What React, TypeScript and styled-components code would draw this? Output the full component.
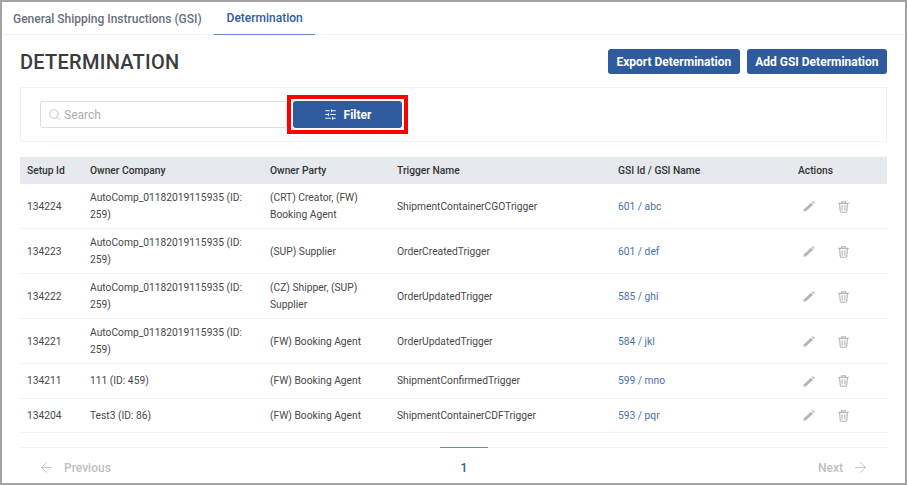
import React from 'react';
import styled, { createGlobalStyle } from 'styled-components';
import { ArrowLeft, ArrowRight, Search, SlidersHorizontal } from 'lucide-react';

const GlobalStyle = createGlobalStyle`
    html, body {
        margin: 0;
        padding: 0;
        background: #ffffff;
    }
    * {
        box-sizing: border-box;
    }
`;

const Frame = styled.div`
    width: 907px;
    height: 485px;
    border: 2px solid #a3a3a3;
    background: #ffffff;
    font-family: Roboto, 'Liberation Sans', sans-serif;
    color: #3c3c3c;
    overflow: hidden;
`;

const Tabs = styled.div`
    display: flex;
    height: 33px;
    border-bottom: 1px solid #eff0f2;
`;

const Tab = styled.div<{ $active?: boolean }>`
    height: 33px;
    display: flex;
    align-items: center;
    font-size: 12px;
    font-weight: 500;
    color: ${(p) => (p.$active ? '#2f5b9e' : '#68707c')};
    border-bottom: ${(p) => (p.$active ? '1px solid #5f86bd' : 'none')};
    padding: ${(p) => (p.$active ? '0 12px 0 13px' : '0 12px 0 11px')};
`;

const Content = styled.div`
    padding: 14px 18px 0 18px;
`;

const HeaderRow = styled.div`
    display: flex;
    justify-content: space-between;
    align-items: center;
    height: 25px;
`;

const Title = styled.h1`
    margin: 0;
    font-size: 20px;
    font-weight: 500;
    letter-spacing: 0.27px;
    color: #3b3b3b;
`;

const HeaderButtons = styled.div`
    display: flex;
    gap: 7px;
`;

const PrimaryButton = styled.button`
    height: 25px;
    padding: 0 8.5px;
    border: none;
    border-radius: 3px;
    background: #2f5b9e;
    color: #ffffff;
    font-family: inherit;
    font-size: 12px;
    font-weight: 700;
`;

const FilterPanel = styled.div`
    margin-top: 13px;
    height: 55px;
    border: 1px solid #f0f1f3;
    display: flex;
    align-items: center;
    padding-left: 19px;
`;

const SearchBox = styled.div`
    width: 247px;
    height: 27px;
    border: 1px solid #dcdee2;
    border-radius: 2px;
    display: flex;
    align-items: center;
    gap: 3px;
    padding-left: 7px;
    font-size: 12px;
    color: #a9adb4;
`;

const FilterHighlight = styled.div`
    border: 4px solid #ff0000;
    padding: 2px;
    height: 39px;
`;

const FilterButton = styled.button`
    width: 109px;
    height: 27px;
    border: none;
    border-radius: 3px;
    background: #2f5b9e;
    color: #ffffff;
    font-family: inherit;
    font-size: 12px;
    font-weight: 700;
    display: flex;
    align-items: center;
    justify-content: center;
    gap: 7px;
`;

const Table = styled.table`
    width: 100%;
    margin-top: 15px;
    border-collapse: collapse;
    table-layout: fixed;
    font-size: 10.25px;
`;

const HeadCell = styled.th`
    height: 27px;
    padding: 0 7px;
    background: #e6e9ee;
    text-align: left;
    font-weight: 500;
    color: #333333;
`;

const Row = styled.tr`
    border-bottom: 1px solid #f0f1f3;
`;

const Cell = styled.td<{ $tall?: boolean }>`
    padding: ${(p) => (p.$tall ? '5px 7px' : '8px 7px 8.5px')};
    line-height: 17px;
    color: #484848;
    vertical-align: middle;
`;

const GsiLink = styled.span`
    color: #4a6fa8;
`;

const Actions = styled.div`
    display: flex;
    align-items: center;
    gap: 23px;
    padding: 1px 0 0 5px;
`;

const Pager = styled.div`
    margin-top: 14px;
    height: 40px;
    border-top: 1px solid #f0f1f3;
    display: grid;
    grid-template-columns: 420px 48px 1fr;
    align-items: center;
    font-size: 12px;
    font-weight: 500;
    color: #bcbfc4;
`;

const PagerSide = styled.div<{ $right?: boolean }>`
    display: flex;
    align-items: center;
    gap: 9px;
    justify-content: ${(p) => (p.$right ? 'flex-end' : 'flex-start')};
    padding: ${(p) => (p.$right ? '0 18px 0 0' : '0 0 0 18px')};
`;

const PageNumber = styled.div`
    height: 40px;
    margin-top: -1px;
    border-top: 1px solid #5f86bd;
    display: flex;
    align-items: center;
    justify-content: center;
    color: #2f5b9e;
`;

const Pencil = () => (
    <svg width="12" height="11" viewBox="0 0 12 11" fill="#b4b4b4">
        <path d="M0.4 10.8 L1 8.3 L8 1.7 L10.1 3.8 L3 10.2 Z" />
        <path d="M8.7 1 L9.4 0.4 Q9.9 0 10.4 0.4 L11.4 1.4 Q11.8 1.9 11.4 2.4 L10.8 3.1 Z" />
    </svg>
);

const Trash = () => (
    <svg width="11" height="12" viewBox="0 0 11 12" fill="none" stroke="#b4b4b4" strokeWidth="1.1">
        <path d="M0.3 2.4 H10.7" strokeWidth="1.3" />
        <path d="M3.6 2.2 V0.7 H7.4 V2.2" />
        <path d="M1.6 2.6 L2.2 10.2 Q2.3 11.3 3.3 11.3 H7.7 Q8.7 11.3 8.8 10.2 L9.4 2.6" />
        <path d="M4.1 4.2 V9.6 M6.9 4.2 V9.6" />
    </svg>
);

type Determination = {
    id: string;
    company: string;
    party: string;
    trigger: string;
    gsi: string;
    tall: boolean;
};

const rows: Determination[] = [
    { id: '134224', company: 'AutoComp_01182019115935 (ID: 259)', party: '(CRT) Creator, (FW) Booking Agent', trigger: 'ShipmentContainerCGOTrigger', gsi: '601 / abc', tall: true },
    { id: '134223', company: 'AutoComp_01182019115935 (ID: 259)', party: '(SUP) Supplier', trigger: 'OrderCreatedTrigger', gsi: '601 / def', tall: true },
    { id: '134222', company: 'AutoComp_01182019115935 (ID: 259)', party: '(CZ) Shipper, (SUP) Supplier', trigger: 'OrderUpdatedTrigger', gsi: '585 / ghi', tall: true },
    { id: '134221', company: 'AutoComp_01182019115935 (ID: 259)', party: '(FW) Booking Agent', trigger: 'OrderUpdatedTrigger', gsi: '584 / jkl', tall: true },
    { id: '134211', company: '111 (ID: 459)', party: '(FW) Booking Agent', trigger: 'ShipmentConfirmedTrigger', gsi: '599 / mno', tall: false },
    { id: '134204', company: 'Test3 (ID: 86)', party: '(FW) Booking Agent', trigger: 'ShipmentContainerCDFTrigger', gsi: '593 / pqr', tall: false },
];

const App: React.FC = () => {
    return (
        <Frame>
            <GlobalStyle />
            <Tabs>
                <Tab>General Shipping Instructions (GSI)</Tab>
                <Tab $active>Determination</Tab>
            </Tabs>
            <Content>
                <HeaderRow>
                    <Title>DETERMINATION</Title>
                    <HeaderButtons>
                        <PrimaryButton>Export Determination</PrimaryButton>
                        <PrimaryButton>Add GSI Determination</PrimaryButton>
                    </HeaderButtons>
                </HeaderRow>
                <FilterPanel>
                    <SearchBox>
                        <Search size={13} strokeWidth={1.4} color="#b5b8bd" />
                        Search
                    </SearchBox>
                    <FilterHighlight>
                        <FilterButton>
                            <SlidersHorizontal size={13} strokeWidth={1.7} />
                            Filter
                        </FilterButton>
                    </FilterHighlight>
                </FilterPanel>
                <Table>
                    <colgroup>
                        <col style={{ width: 63 }} />
                        <col style={{ width: 180 }} />
                        <col style={{ width: 127 }} />
                        <col style={{ width: 221 }} />
                        <col style={{ width: 180 }} />
                        <col style={{ width: 96 }} />
                    </colgroup>
                    <thead>
                        <tr>
                            <HeadCell>Setup Id</HeadCell>
                            <HeadCell>Owner Company</HeadCell>
                            <HeadCell>Owner Party</HeadCell>
                            <HeadCell>Trigger Name</HeadCell>
                            <HeadCell>GSI Id / GSI Name</HeadCell>
                            <HeadCell>Actions</HeadCell>
                        </tr>
                    </thead>
                    <tbody>
                        {rows.map((r) => (
                            <Row key={r.id}>
                                <Cell $tall={r.tall}>{r.id}</Cell>
                                <Cell $tall={r.tall}>{r.company}</Cell>
                                <Cell $tall={r.tall}>{r.party}</Cell>
                                <Cell $tall={r.tall}>{r.trigger}</Cell>
                                <Cell $tall={r.tall}><GsiLink>{r.gsi}</GsiLink></Cell>
                                <Cell $tall={r.tall}>
                                    <Actions>
                                        <Pencil />
                                        <Trash />
                                    </Actions>
                                </Cell>
                            </Row>
                        ))}
                    </tbody>
                </Table>
                <Pager>
                    <PagerSide>
                        <ArrowLeft size={17} strokeWidth={1.3} />
                        Previous
                    </PagerSide>
                    <PageNumber>1</PageNumber>
                    <PagerSide $right>
                        Next
                        <ArrowRight size={17} strokeWidth={1.3} />
                    </PagerSide>
                </Pager>
            </Content>
        </Frame>
    );
};

export default App;
